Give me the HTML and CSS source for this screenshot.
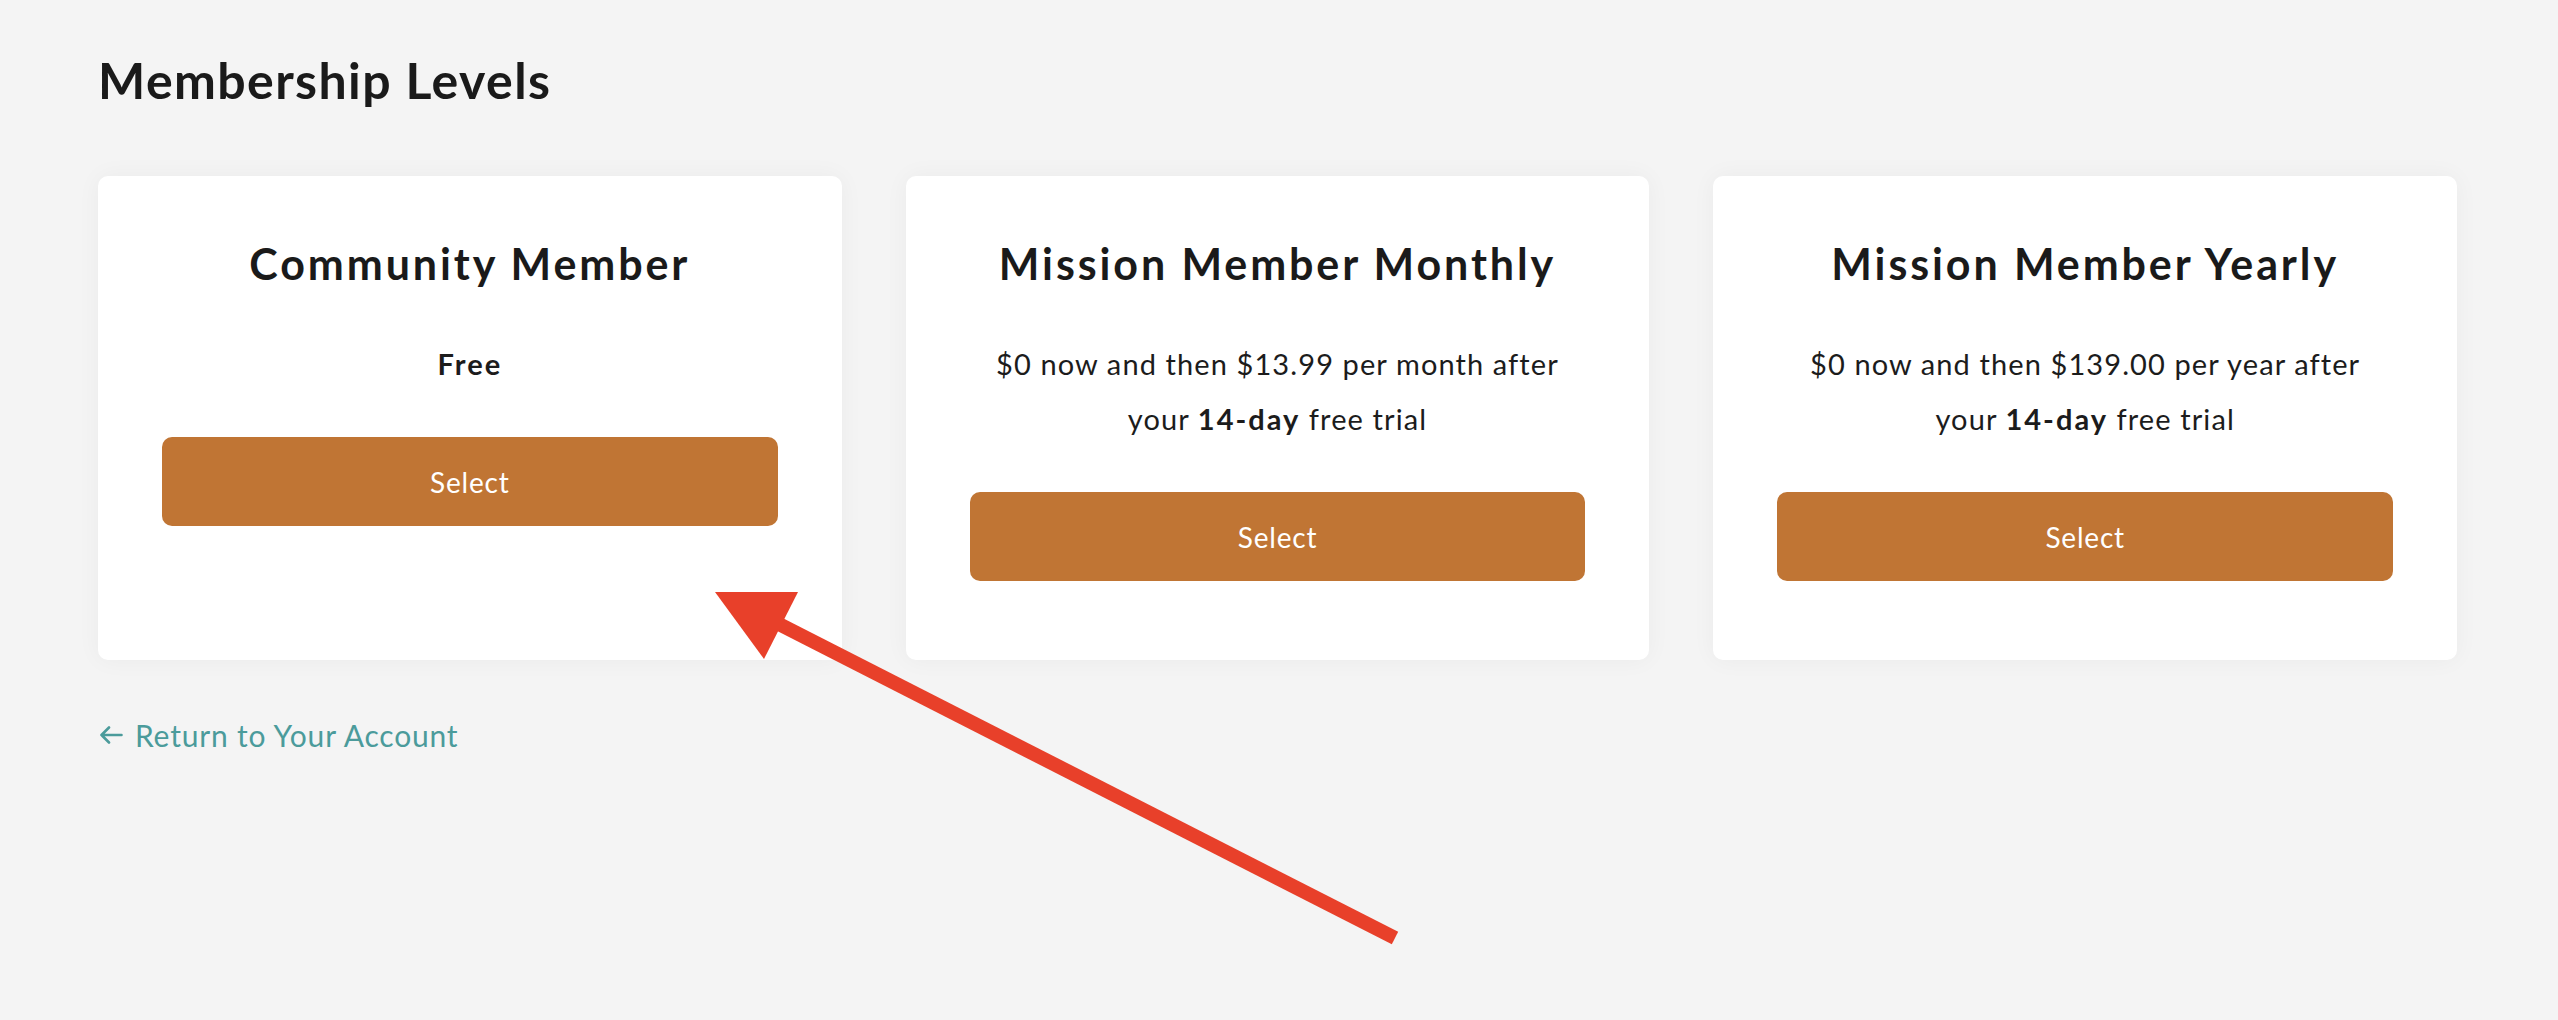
FILE: index.html
```html
<!DOCTYPE html>
<html lang="en">
<head>
<meta charset="utf-8">
<title>Membership Levels</title>
<link rel="stylesheet" href="styles.css">
</head>
<body>
<main class="page">
  <h1 class="page-title">Membership Levels</h1>
  <div class="levels">
    <section class="level-card">
      <h2 class="level-name">Community Member</h2>
      <p class="level-price"><strong>Free</strong></p>
      <button class="select-btn" type="button">Select</button>
    </section>
    <section class="level-card">
      <h2 class="level-name">Mission Member Monthly</h2>
      <p class="level-price">$0 now and then $13.99 per month after<br>your <strong>14-day</strong> free trial</p>
      <button class="select-btn" type="button">Select</button>
    </section>
    <section class="level-card">
      <h2 class="level-name">Mission Member Yearly</h2>
      <p class="level-price">$0 now and then $139.00 per year after<br>your <strong>14-day</strong> free trial</p>
      <button class="select-btn" type="button">Select</button>
    </section>
  </div>
  <a class="back-link" href="#">
    <svg class="back-icon" width="24" height="18" viewBox="0 0 24 18" aria-hidden="true"><path d="M22.5 9H2.5M10 1.5L2.5 9l7.5 7.5" fill="none" stroke="currentColor" stroke-width="2.6" stroke-linecap="round" stroke-linejoin="round"/></svg>
    <span>Return to Your Account</span>
  </a>
</main>
<svg class="annotation" width="2558" height="1020" viewBox="0 0 2558 1020" aria-hidden="true">
  <line x1="775" y1="622" x2="1395" y2="938" stroke="#E8402A" stroke-width="14"/>
  <polygon points="715,592 798,592 764,659" fill="#E8402A"/>
</svg>
</body>
</html>
```
FILE: styles.css
```css
html, body {
  margin: 0;
  padding: 0;
}
body {
  background: #f4f4f4;
  font-family: "Lato", "Liberation Sans", sans-serif;
  color: #1b1b1b;
  min-height: 1020px;
  position: relative;
  overflow: hidden;
}
.page {
  padding: 50px 101px 0 98px;
}
.page-title {
  margin: 0;
  font-size: 50px;
  line-height: 60px;
  font-weight: 700;
  letter-spacing: 1.4px;
  color: #1a1a1a;
}
.levels {
  margin-top: 66px;
  display: grid;
  grid-template-columns: repeat(3, 1fr);
  gap: 64px;
}
.level-card {
  background: #fff;
  border-radius: 10px;
  box-shadow: 0 0 24px rgba(0, 0, 0, 0.045);
  padding: 63px 64px 79px;
  display: flex;
  flex-direction: column;
  align-items: stretch;
  text-align: center;
}
.level-name {
  margin: 0;
  font-size: 43px;
  line-height: 50px;
  font-weight: 700;
  letter-spacing: 2.9px;
  color: #1a1a1a;
}
.level-price {
  margin: 47px 0 46px;
  font-size: 29px;
  line-height: 55px;
  letter-spacing: 1.1px;
  color: #1c1c1c;
}
.level-price strong {
  font-weight: 700;
  letter-spacing: 2px;
}
.select-btn {
  height: 89px;
  border: 0;
  border-radius: 10px;
  background: #c07534;
  color: #fff;
  font-family: inherit;
  font-size: 28px;
  letter-spacing: 0.8px;
  cursor: pointer;
}
.back-link {
  margin-top: 57px;
  display: inline-flex;
  align-items: center;
  gap: 12px;
  font-size: 30px;
  line-height: 36px;
  letter-spacing: 0.8px;
  color: #4b9b9b;
  text-decoration: none;
}
.back-icon {
  display: block;
  margin-left: 1px;
}
.annotation {
  position: absolute;
  top: 0;
  left: 0;
  pointer-events: none;
}
```
